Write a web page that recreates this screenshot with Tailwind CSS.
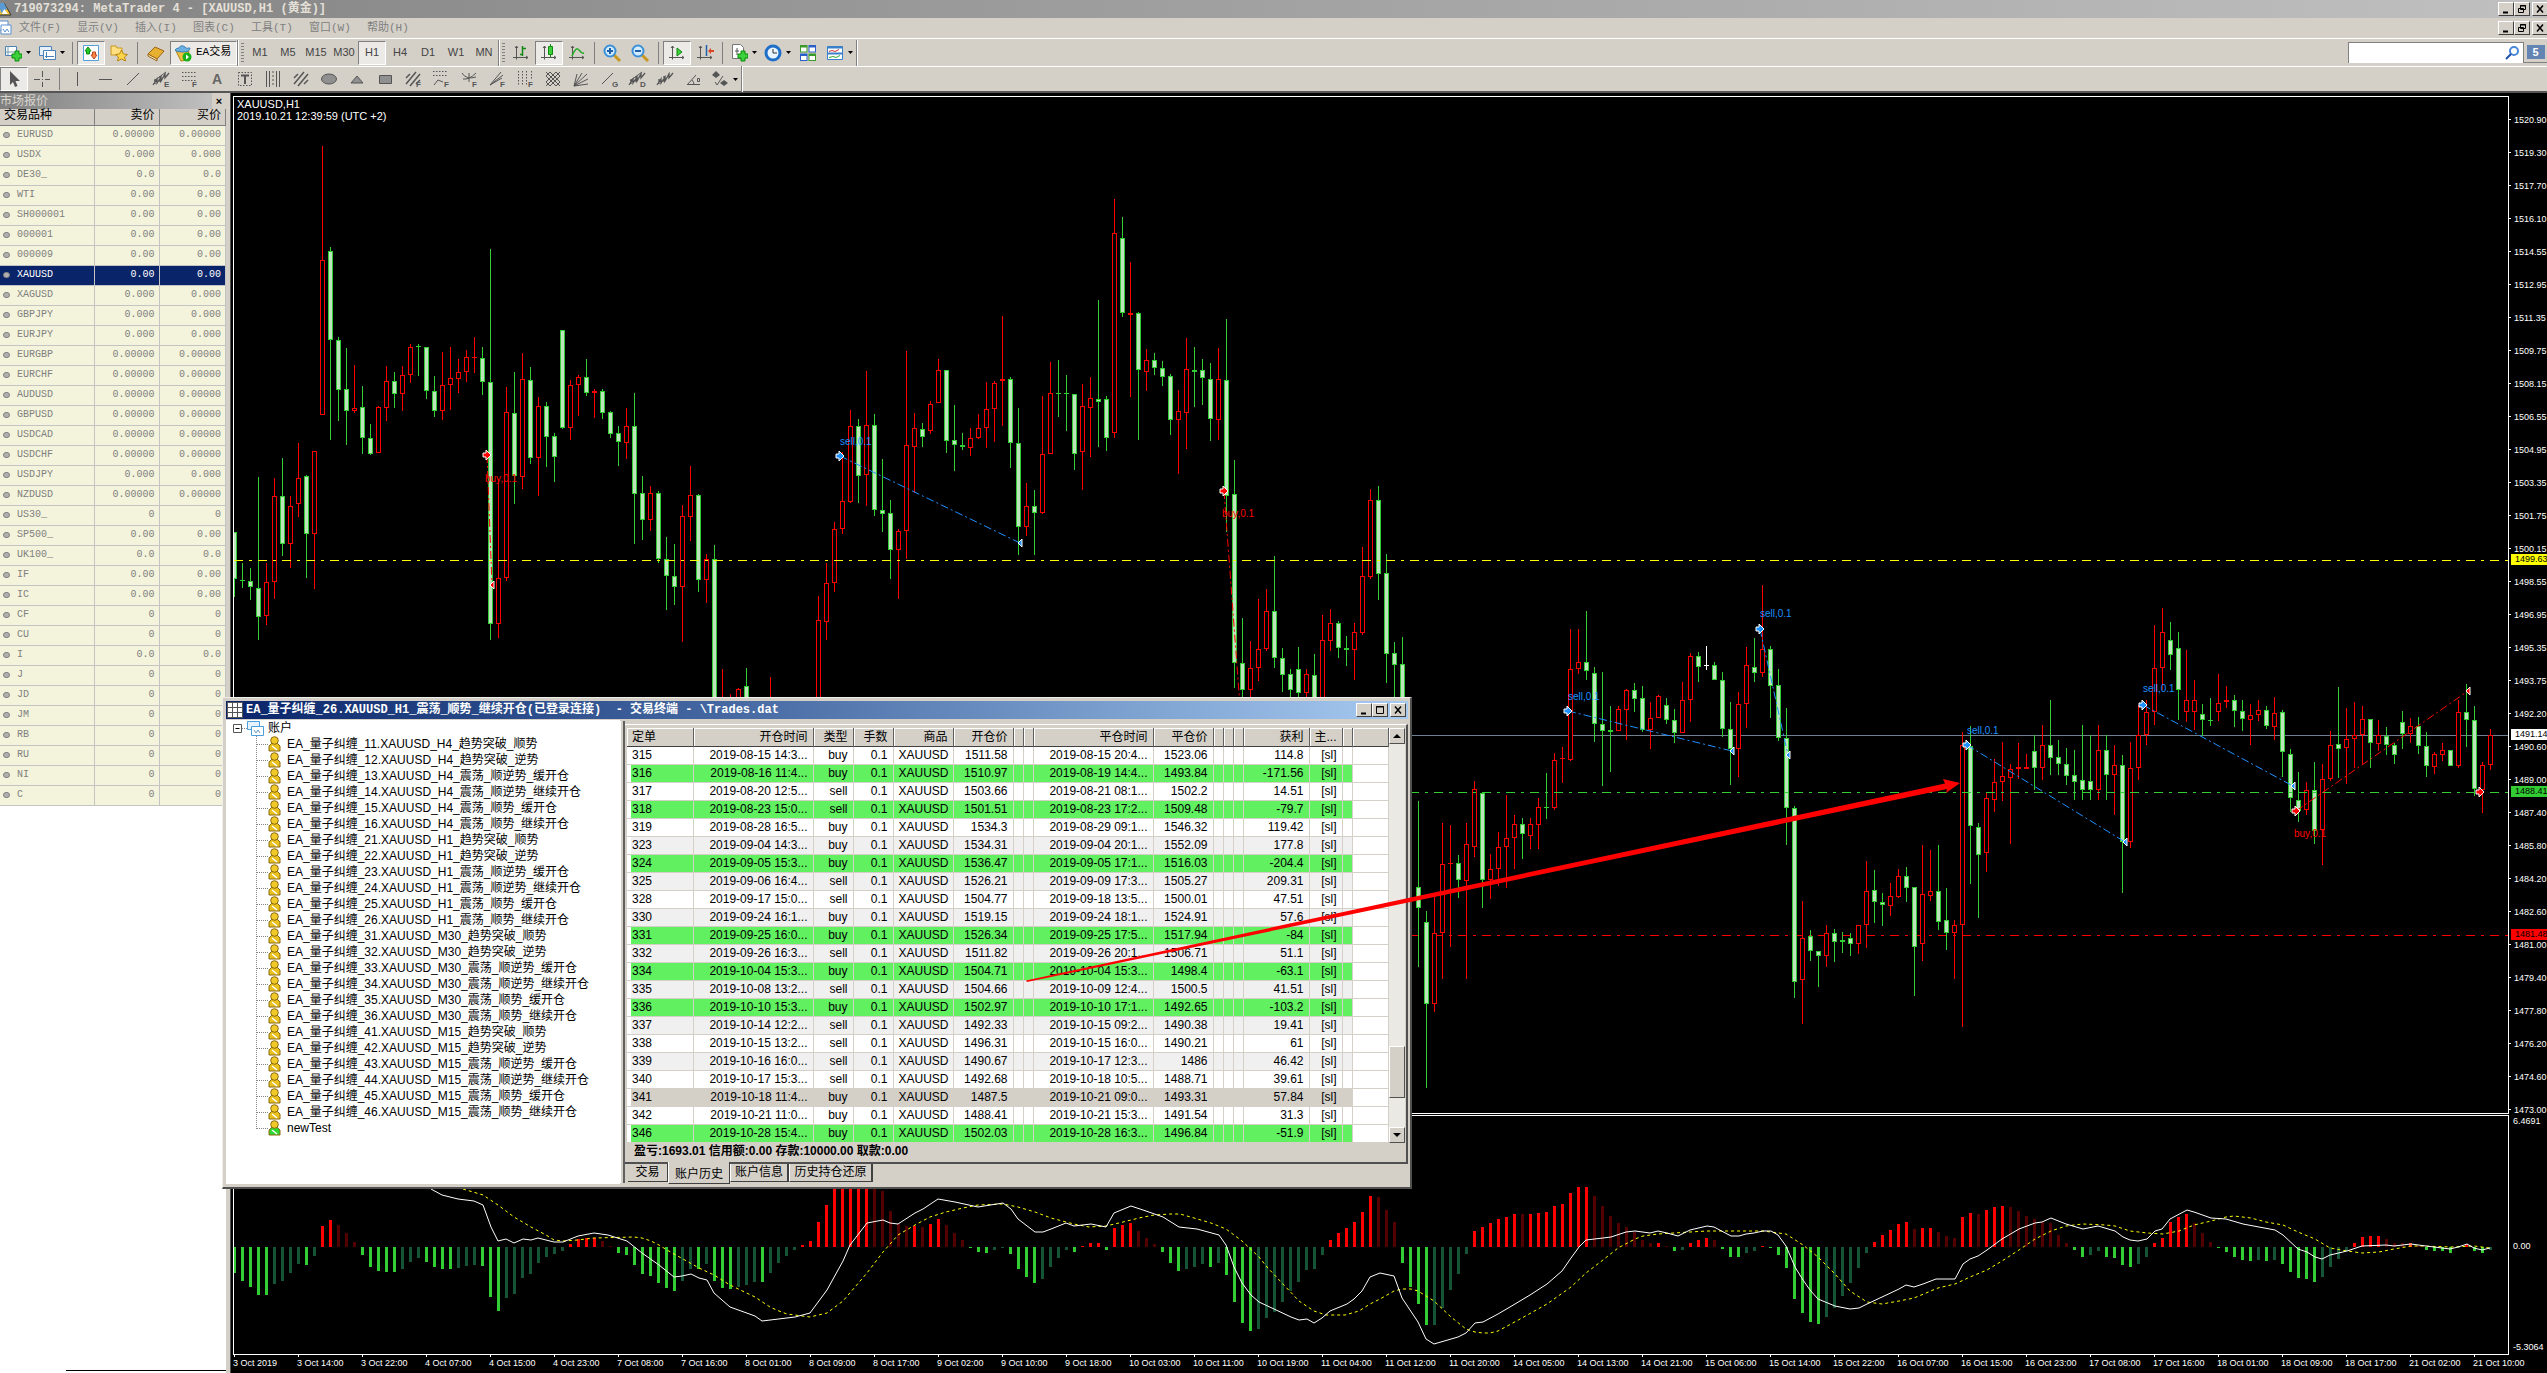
<!DOCTYPE html>
<html lang="zh-CN">
<head>
<meta charset="utf-8">
<title>719073294: MetaTrader 4 - [XAUUSD,H1 (黄金)]</title>
<script src="https://cdn.jsdelivr.net/npm/@tailwindcss/browser@4"></script>
</head>
<body class="relative flex min-h-screen flex-col overflow-hidden bg-[#d4d0c8] font-['Liberation_Sans','Noto_Sans_CJK_SC',sans-serif] text-xs text-black">

<header class="shrink-0">
  <div class="flex h-[18px] items-center bg-linear-to-r from-[#848484] to-[#c0c0c0]">
    <svg class="h-4 w-3" viewBox="4 0 12 16"><path d="M0 14 8 2l7 12z" fill="#f4c430" stroke="#333"/><path d="M3 2h5l3 6-6 4z" fill="#5b9bd5"/><path d="m8 8 4 5H6z" fill="#fff"/></svg>
    <h1 class="ml-[2px] flex-1 font-['Liberation_Mono','Noto_Sans_CJK_SC',monospace] text-xs font-bold whitespace-nowrap text-[#e4e0d8]">719073294: MetaTrader 4 - [XAUUSD,H1 (黄金)]</h1>
    <div class="-mr-[3px] flex" data-controls="restore"></div>
  </div>
  <nav class="flex h-5 items-center font-['Liberation_Mono','Noto_Sans_CJK_SC',monospace] text-[11px] text-[#808080]">
    <svg class="h-4 w-[19px]" viewBox="0 0 19 16" fill="none" stroke="#5b8fd0"><path d="M-3 1h11v9h-11z" fill="#fff"/><path d="M1 5h10v9H1z" fill="#fff"/><path d="m3 9 2 3 2-3 2 3"/></svg>
    <div class="flex flex-1" id="menu"></div>
    <div class="-mr-[3px] flex" data-controls="restore"></div>
  </nav>
  <div class="flex h-[28px] items-center border-t border-white shadow-[inset_0_1px_0_#d4d0c8]">
    <div id="tb1" class="flex h-[26px] flex-1 items-center"></div>
    <label class="flex h-[21px] w-[175px] items-center border-t border-l border-[#808080] bg-white">
      <input aria-label="搜索" class="h-full w-[155px] bg-white px-1 outline-none">
      <svg class="h-4 w-4" viewBox="0 0 16 16" fill="none"><circle cx="10" cy="6" r="4" stroke="#4a86d8" stroke-width="2"/><path d="m7 9-5 5" stroke="#1f4fa8" stroke-width="2"/></svg>
    </label>
    <button class="flex h-[21px] w-6 items-center justify-center border-b border-l border-[#808080]" aria-label="消息"><span class="h-[14px] w-[18px] bg-[#6484b4] text-center text-[11px] leading-[14px] font-bold text-white">5</span></button>
  </div>
  <div id="tb2" class="flex h-[27px] items-center border-t border-b-2 border-t-white border-b-[#555]"></div>
</header>

<main class="flex flex-1">
  <aside class="flex w-[226px] shrink-0 flex-col bg-white">
    <div class="flex h-4 items-center bg-linear-to-r from-[#808080] to-[#c4c4c4] text-xs text-[#d8d4cc]">
      <h2 class="flex-1">市场报价</h2>
      <button class="h-4 w-[14px] bg-[#d4d0c8] text-[11px] leading-4 font-bold text-black" aria-label="关闭">×</button>
    </div>
    <table class="w-full table-fixed border-collapse font-['Liberation_Mono','Noto_Sans_CJK_SC',monospace] text-[10px]">
      <thead>
        <tr class="h-4 bg-[#d4d0c8] text-xs">
          <th class="w-[94px] border-r border-b border-[#808080] pl-1 text-left leading-[15px] font-normal">交易品种</th>
          <th class="w-[65px] border-r border-b border-[#808080] pr-1 text-right leading-[15px] font-normal">卖价</th>
          <th class="border-r border-b border-[#808080] pr-1 text-right leading-[15px] font-normal">买价</th>
        </tr>
      </thead>
      <tbody id="quotes"></tbody>
    </table>
    <div class="mt-auto mb-[2px] ml-[66px] h-px bg-black"></div>
  </aside>
  <div class="w-1 shrink-0 bg-[#d4d0c8]"></div>

  <section class="flex min-w-0 flex-1 flex-col border-l border-[#555] bg-black pt-[3px] pl-[2px] text-white">
    <div class="flex h-[1018px] shrink-0">
      <div class="relative min-w-0 flex-1 overflow-hidden border border-white">
        <svg id="price" class="block h-full w-full"></svg>
        <div class="absolute top-px left-[3px] text-[11px] leading-3">XAUUSD,H1<br>2019.10.21 12:39:59 (UTC +2)</div>
      </div>
      <div class="relative w-[38px] shrink-0 overflow-hidden text-[9px]">
        <div id="scale" class="mt-[7px]"></div>
        <div class="absolute top-[458px] left-[2px] h-[11px] w-full bg-[#ff0] pl-1 leading-[11px] text-black">1499.63</div>
        <div class="absolute top-[633px] left-[2px] h-[11px] w-full bg-white pl-1 leading-[11px] text-black">1491.14</div>
        <div class="absolute top-[690px] left-[2px] h-[11px] w-full bg-[#32cd32] pl-1 leading-[11px] text-black">1488.41</div>
        <div class="absolute top-[833px] left-[2px] h-[11px] w-full bg-[#f00] pl-1 leading-[11px] text-black">1481.48</div>
      </div>
    </div>
    <div class="mt-px flex min-h-[236px] flex-1">
      <div class="min-w-0 flex-1 overflow-hidden border border-white">
        <svg id="macd" class="block h-[236px] w-full"></svg>
      </div>
      <div class="flex w-[38px] shrink-0 flex-col pl-1 text-[9px] leading-3">
        <span>6.4691</span><span class="mt-[113px]">0.00</span><span class="mt-[89px]">-5.3064</span>
      </div>
    </div>
    <div id="dates" class="flex h-[18px] shrink-0 overflow-hidden text-[9px]"></div>
  </section>
</main>

<section class="absolute top-[697px] left-[222px] flex h-[492px] w-[1190px] flex-col border-t border-r-2 border-b-2 border-l border-t-[#f0eee8] border-r-[#505050] border-b-[#505050] border-l-[#f0eee8] bg-[#d4d0c8] pt-[3px] pr-[2px] pb-[3px] pl-[3px]">
  <div class="flex h-[18px] shrink-0 items-center bg-linear-to-r from-[#0a246a] to-[#a6caf0]">
    <svg class="mx-[1px] h-4 w-4" viewBox="0 0 16 16" fill="#fff" stroke="#555"><path d="M.5.5h15v15H.5zM.5 5.5h15M.5 10.5h15M5.500.5v15M10.5.5v15"/></svg>
    <h2 class="ml-[2px] flex-1 font-['Liberation_Mono','Noto_Sans_CJK_SC',monospace] text-xs font-bold whitespace-pre text-white">EA_量子纠缠_26.XAUUSD_H1_震荡_顺势_继续开仓(已登录连接)  - 交易终端 - \Trades.dat</h2>
    <div class="flex" data-controls="max"></div>
  </div>
  <div class="flex min-h-0 flex-1 pt-px">
    <div class="relative w-[394px] shrink-0 bg-white pl-[7px]">
      <div class="flex h-4 items-center">
        <svg class="h-[17px] w-[31px]" viewBox="0 0 31 17" fill="none"><path d="M.5 4.500h8v8h-8z" stroke="#555"/><path d="M2.500 8.500h4" stroke="#000"/><path d="M9 8.500h5" stroke="#888" stroke-dasharray="1 1"/><path d="M14.500 1.500h12v8h-12z" fill="#e8f2ff" stroke="#4aa0dc"/><path d="M18.500 6.500h12v9h-12z" fill="#fff" stroke="#4aa0dc"/><path d="m21 10 2 3 2-3 2 3" stroke="#69c"/></svg>
        <span class="ml-1">账户</span>
      </div>
      <ul id="tree" class="ml-[22px] leading-4"></ul>
    </div>
    <div class="my-px w-[5px] shrink-0 border-l border-white border-r-2 border-r-[#606060]"></div>
    <div class="flex min-w-0 flex-1 flex-col">
      <div class="mt-1 flex h-[440px] flex-col border-t border-r-2 border-b-2 border-t-white border-r-[#505050] border-b-[#505050] pt-[3px] pl-[2px]">
        <div class="flex h-[415px] bg-white">
          <table class="w-[761px] table-fixed border-collapse self-start text-xs">
            <colgroup id="cols"></colgroup>
            <thead><tr id="heads" class="h-[18px] border-b border-[#404040] bg-[#d4d0c8]"></tr></thead>
            <tbody id="orders"></tbody>
          </table>
          <div class="flex w-4 shrink-0 flex-col bg-[#ebe9e4]">
            <button class="flex h-4 items-center justify-center border border-t-white border-r-[#505050] border-b-[#505050] border-l-white bg-[#d4d0c8]" aria-label="向上"><svg class="h-1 w-2" viewBox="0 0 8 4"><path d="m0 4 4-4 4 4z"/></svg></button>
            <div class="mt-[302px] h-[52px] border border-t-white border-r-[#505050] border-b-[#505050] border-l-white bg-[#d4d0c8]"></div>
            <button class="mt-auto flex h-4 items-center justify-center border border-t-white border-r-[#505050] border-b-[#505050] border-l-white bg-[#d4d0c8]" aria-label="向下"><svg class="h-1 w-2" viewBox="0 0 8 4"><path d="m0 0 4 4 4-4z"/></svg></button>
          </div>
          <div class="flex-1 bg-[#d4d0c8]"></div>
        </div>
        <p class="pl-[7px] leading-4 font-bold">盈亏:1693.01 信用额:0.00 存款:10000.00 取款:0.00</p>
      </div>
      <div class="flex items-start pl-[3px]">
        <button class="h-[18px] w-10 border-r border-b border-[#404040] leading-[17px]">交易</button>
        <button class="-mt-[2px] h-[22px] w-[62px] border-r border-b border-l border-[#404040] border-l-white bg-[#d4d0c8] pt-[3px]">账户历史</button>
        <button class="h-[18px] w-[59px] border-r-2 border-b border-l border-[#404040] border-l-white leading-[17px]">账户信息</button>
        <button class="h-[18px] w-[84px] border-r-2 border-b border-l border-[#404040] border-l-white leading-[17px]">历史持仓还原</button>
      </div>
    </div>
  </div>
</section>

<svg class="pointer-events-none absolute top-[770px] left-[1020px] h-[220px] w-[950px]" viewBox="1020 770 950 220"><path d="M1026 980.500 1420 895.500 1945 783.500 1943 779 1960 783 1946 793 1947 789 1420 900 1027 982z" fill="#f00"/></svg>

<script>
const $ = id => document.getElementById(id);
const box = 'flex h-[14px] w-4 items-center justify-center border border-t-white border-l-white border-b-[#404040] border-r-[#404040] bg-[#d4d0c8]';
const glyph = {
  min: ['最小化', '<path d="M2 8.500h5" stroke-width="2"/>'],
  restore: ['还原', '<path d="M3.500 1.500h5v4h-5zM1.500 4.500h5v4h-5zM3 2h6"/>'],
  max: ['最大化', '<path d="M1.500 1.500h7v7h-7zM1 2h8"/>'],
  close: ['关闭', '<path d="m2 1.500 6 7m0-7-6 7" stroke-width="1.500"/>']
};
document.querySelectorAll('[data-controls]').forEach(el => {
  el.innerHTML = ['min', el.dataset.controls, 'close'].map((k, i) => `<button class="${box} ${i === 2 ? 'ml-[2px] mr-[2px]' : ''}" aria-label="${glyph[k][0]}"><svg class="h-[10px] w-[10px]" viewBox="0 0 10 10" fill="none" stroke="#000">${glyph[k][1]}</svg></button>`).join('');
});
$('menu').innerHTML = ['文件(F)', '显示(V)', '插入(I)', '图表(C)', '工具(T)', '窗口(W)', '帮助(H)'].map(t => `<button class="w-[58px] text-left">${t}</button>`).join('');

/* toolbars */
const sep = '<span class="mx-1 h-[22px] w-px bg-[#808080]"></span>';
const slim = '<span class="mx-[3px] h-[22px] w-px bg-[#808080]"></span>';
const grip = '<span class="mx-[2px] h-5 w-[3px] bg-[repeating-linear-gradient(#808080_0_1px,transparent_1px_3px)]"></span>';
const edge = '<span class="h-[26px] w-[2px] border-r border-l border-l-[#808080] border-r-white"></span>';
const pressed = 'border border-t-[#808080] border-l-[#808080] border-b-white border-r-white bg-[#eceae6]';
const btn = (name, art, on) => `<button class="flex h-6 w-7 items-center justify-center ${on ? pressed : ''}" aria-label="${name}"><svg class="h-[18px] w-[18px] overflow-visible" viewBox="0 0 18 18" fill="none" stroke="#555">${art}</svg></button>`;
const drop = (name, art) => `<button class="flex h-6 w-[34px] items-center gap-1 pl-1" aria-label="${name}"><svg class="h-[18px] w-[18px]" viewBox="0 0 18 18" fill="none" stroke="#555">${art}</svg><svg class="h-[3px] w-[5px]" viewBox="0 0 5 3"><path d="M0 0h5L2.500 3z"/></svg></button>`;
const axes = '<path d="M4.500 2v13.500M1 13.500h15M3 4l1.500-2L6 4M14 12l2 1.500-2 1.500"/>';
const plus = '<path d="M11 7h4v3h3v4h-3v3h-4v-3H8v-4h3z" fill="#3bd13b" stroke="#0a8a0a"/>';
const F = (c = 'F') => `<text x="12" y="17" font-size="8" fill="#555" stroke="none" font-weight="bold">${c}</text>`;
$('tb1').innerHTML =
  drop('新图表', '<path d="M1.500 2.500h11v9h-11z" fill="#fff" stroke="#4a80b8"/><path d="M4 2v9M2 8h10" stroke="#79a"/>' + plus) +
  drop('配置', '<path d="M1.500 2.500h12v9h-12z" fill="#e6f0fa" stroke="#4a80b8"/><path d="M5.500 6.500h12v9h-12z" fill="#fff" stroke="#4a80b8"/><path d="M8.500 8v6M7 12.500h9"  stroke="#4a80b8"/>') + sep +
  btn('市场报价', '<path d="M1.500 1.500h15v15h-15z" fill="#fff" stroke="#58a0d8"/><path d="m6 3 3 4H7.500v3h-3V7H3z" fill="#2c2" stroke="#181"/><path d="m12 15-3-4h1.500V8h3v3H15z" fill="#f84" stroke="#b42"/>', 1) +
  btn('导航', '<path d="M1 2h5l1 2h5v7H1z" fill="#ffe080" stroke="#c99820"/><path d="m11.500 6 2 4 4 .5-3 2.500 1 4-4-2-4 2 1-4-3-2.500 4-.5z" fill="#ffd54a" stroke="#b98410"/>') + sep +
  btn('指南', '<path d="m1 10 7-7 9 4-7 8z" fill="#e8b030" stroke="#9a6410"/><path d="m1 10 9 5 0 2-9-5z" fill="#fff4c8" stroke="#9a6410"/>') +
  `<button class="flex h-6 w-[67px] items-center gap-1 pl-[3px] text-xs whitespace-nowrap ${pressed}"><svg class="h-[18px] w-[18px]" viewBox="0 0 18 18"><path d="M2 7h13l-2 9-6 1z" fill="#f0c040" stroke="#b08010"/><path d="M1 6q1-2 4-2 2-4 6-1 1 2 5 1 0 4-7 4T1 6z" fill="#6ab0e0" stroke="#3a80b8"/><circle cx="13" cy="13" r="4.500" fill="#18b018"/><path d="m12 10.500 3 2.500-3 2.500z" fill="#fff"/></svg><span class="font-['Liberation_Mono','Noto_Sans_CJK_SC',monospace] text-[11px]">EA交易</span></button>` + edge + grip +
  ['M1', 'M5', 'M15', 'M30', 'H1', 'H4', 'D1', 'W1', 'MN'].map(t => `<button class="h-6 w-7 text-[11px] text-[#444] ${t === 'H1' ? pressed : ''}">${t}</button>`).join('') + edge + grip +
  btn('柱状图', axes + '<path d="M10.500 2v10M8 10.500h2M11 4.500h3" stroke="#181" stroke-width="1.500"/>') +
  btn('阴阳烛', axes + '<path d="M10.500 0v13" stroke="#181"/><path d="M8.500 2.500h4v8h-4z" fill="#3bd13b" stroke="#181"/>', 1) +
  btn('折线图', axes + '<path d="M4 12q4-10 7-6t5 3" stroke="#2a2" stroke-width="1.500"/>') + slim +
  ['放大', '缩小'].map((n, i) => btn(n, `<path d="m11 11 6 6" stroke="#c99820" stroke-width="3"/><circle cx="7" cy="7" r="5.500" fill="#d4ecff" stroke="#3a90d8" stroke-width="2"/><path d="M4 7h6${i ? '' : 'M7 4v6'}" stroke="#1f5fa8" stroke-width="2"/>`)).join('') + sep +
  btn('自动滚动', axes + '<path d="m9 4 5 4-5 4z" fill="#3bd13b" stroke="#181"/>', 1) +
  btn('图表平移', axes + '<path d="M10.500 1v11" stroke="#1f5fa8" stroke-width="1.500"/><path d="m12 7 3-3v2h3v2h-3v2z" fill="#d42" stroke="none"/>') + slim +
  drop('指标', '<path d="M2.500.5h8l3 3v11h-11z" fill="#fff" stroke="#777"/><path d="M7 4v7M5 7h4" stroke="#555"/>' + plus) +
  drop('时间周期', '<circle cx="9" cy="9" r="7" fill="#e8f4ff" stroke="#1f6fc8" stroke-width="3"/><path d="M9 5v4h4" stroke="#333"/>') +
  btn('模板', '<path d="M1 1h7.500v7.500H1zM9.500 9.500H17V17H9.500z" fill="#3a9a2a" stroke="none"/><path d="M9.500 1H17v7.500H9.500zM1 9.500h7.500V17H1z" fill="#2a60c8" stroke="none"/><path d="M2 3.500h5.500v4H2zM10.500 3.500H16v4h-5.500zM2 12h5.500v4H2zM10.500 12H16v4h-5.500z" fill="#fff" stroke="none"/>') +
  drop('图表', '<path d="M1.500 2.500h15v13h-15z" fill="#fff" stroke="#3a80c8"/><path d="M1 3.500h16M1 9.500h16" stroke="#3a80c8" stroke-width="2"/><path d="M3 7.500l3-1 3 1 4-2" stroke="#c33"/><path d="m3 13.500 4-1 3 1 4-2" stroke="#3a3"/>') + edge;

const hatch = '<path d="M2 14 12 2M6 16 16 4M2 8l4-4M12 14l4-4" stroke-width="1.500"/>';
const squig = '<path d="m1 15 4-6v4l4-6v4l4-7v4l4-5M3 9v5M8 6v6M13 3v6" stroke-width="1.300"/>';
const dots = '<path d="M2 2.500h14M2 6.500h14M2 10.500h14" stroke-dasharray="1.500 1.500"/>';
const tools = [
  ['斜线', '<path d="M3 15 15 3"/>'], ['通道', squig + '<path d="m2 11 12-9"/>' + F('E')], ['斐波那契', dots + F()],
  ['文字', '<text x="4" y="14" font-size="14" font-weight="bold" fill="#666" stroke="none">A</text>'],
  ['标签', '<path d="M2.500 2.500h13v13h-13z" stroke-dasharray="1.500 1.500"/><path d="M5 5.500h8M9 5v9" stroke-width="2"/>'],
  ['周期线', '<path d="M2.500 1v16M5.500 1v16M12.500 1v16M15.500 1v16"/><path d="M9 1v16" stroke-dasharray="2 2"/>'],
  ['平行线', hatch], ['椭圆', '<ellipse cx="9" cy="9" rx="7.500" ry="5" fill="#909090"/>'], ['三角形', '<path d="m3 13 6-7 6 7z" fill="#909090"/>'],
  ['矩形', '<path d="M3.500 5.500h12v8h-12z" fill="#909090"/>'], ['通道F', hatch + F()], ['扩展', '<path d="M1 1.500h15M1 5.500h15" stroke-dasharray="1.500 1.500"/><path d="m2 15 4-5 5 2"/>' + F()],
  ['弧线', '<path d="M2 3q4 7 14 4M3 9q6 1 13-6M9 3v9"/>' + F()], ['扇形', '<path d="M2 15 13 2M2 15 15 5M2 15l12-7"/>' + F()],
  ['时区', '<path d="M2.500 1v15M6.500 1v15M10.500 1v15M15.500 1v9" stroke-dasharray="1.500 1.500"/>' + F()],
  ['网格', '<path d="m2 6 4-4 10 10M2 12l4 4L16 6M2 6l10 10 4-4M2 12 12 2l4 4M2 2l14 14M16 2 2 16"/>'],
  ['甘氏扇', '<path d="M2 16 5 4M2 16 10 3M2 16 15 4M2 16l14-7M2 16l14-2"/>'], ['甘氏线', '<path d="M2 14 13 3"/>' + F('G')],
  ['偏差', squig + '<path d="m2 11 12-9"/>' + F('D')], ['回归', squig], ['角度', '<path d="M3 15 12 5M3 14.500h13M10 15q0-3-2-5M13.500 8.500h2v3h-2z"/>']
];
$('tb2').innerHTML = btn('光标', '<path d="m5 1 0 14 3-3 2 5 2.500-1-2-5H15z" fill="#555" stroke="none"/>', 1) + btn('十字', '<path d="M9.500 1v6M9.500 12v5M1 9.500h6M12 9.500h5M9 9.500h1"/>') + slim +
  btn('垂直线', '<path d="M9.500 2v14"/>') + btn('水平线', '<path d="M3 9.500h13"/>') + tools.map(t => btn(...t)).join('') +
  drop('箭头', '<path d="m5 1 4 4-4 3-4-3zM13 10l4 3-4 3-4-3z" fill="#555" stroke="none"/><path d="m4 12 2 3 6-9"/>') + edge;

/* market watch */
const q = 'EURUSD 5,USDX 3,DE30_ 1,WTI 2,SH000001 2,000001 2,000009 2,XAUUSD 2,XAGUSD 3,GBPJPY 3,EURJPY 3,EURGBP 5,EURCHF 5,AUDUSD 5,GBPUSD 5,USDCAD 5,USDCHF 5,USDJPY 3,NZDUSD 5,US30_ 0,SP500_ 2,UK100_ 1,IF 2,IC 2,CF 0,CU 0,I 1,J 0,JD 0,JM 0,RB 0,RU 0,NI 0,C 0'.split(',');
$('quotes').innerHTML = q.map(s => {
  const [n, d] = s.split(' '), v = (0).toFixed(+d), on = n === 'XAUUSD';
  const td = 'border-r border-b border-[#c4c4c4] pr-1 text-right';
  return `<tr class="h-5 ${on ? 'bg-[#0a246a] text-white' : 'bg-[#f4f4dc] text-[#808080]'}"><td class="border-r border-b border-[#c4c4c4] pl-[3px]"><span class="mr-[7px] inline-block h-[6px] w-[7px] rounded-full border border-[#808080] bg-[#b0b0b0] align-middle"></span>${n}</td><td class="${td}">${v}</td><td class="${td}">${v}</td></tr>`;
}).join('');

/* account tree */
const kinds = ['趋势突破_顺势', '趋势突破_逆势', '震荡_顺逆势_缓开仓', '震荡_顺逆势_继续开仓', '震荡_顺势_缓开仓', '震荡_顺势_继续开仓'];
const names = ['H4', 'H1', 'M30', 'M15'].flatMap((tf, g) => kinds.map((k, i) => `EA_量子纠缠_${g + 1}${i + 1}.XAUUSD_${tf}_${k}`)).concat('newTest');
$('tree').innerHTML = names.map(n => `<li class="flex h-4 items-center whitespace-nowrap"><svg class="mr-1 h-4 w-7" viewBox="0 0 28 16"><path d="M1.500 0v${n === 'newTest' ? 9 : 16}M2 8.500h11" stroke="#888" stroke-dasharray="1 1" fill="none"/><path d="M14 15v-5l3-3h5l3 3v5z" fill="${n === 'newTest' ? '#2fd62f' : '#e8c020'}" stroke="#8a6a10"/><circle cx="19.500" cy="4.500" r="3.800" fill="#f0c828" stroke="#8a6a10"/><path d="m17 10 5 4" stroke="#fff" stroke-width="1.500"/></svg>${n}</li>`).join('');

/* order history */
const w = [66, 120, 40, 40, 60, 60, 10, 10, 120, 60, 10, 10, 10, 66, 33, 10, 36];
const heads = ['定单', '开仓时间', '类型', '手数', '商品', '开仓价', '', '', '平仓时间', '平仓价', '', '', '', '获利', '主...', '', ''];
$('cols').innerHTML = w.map(x => `<col style="width:${x}px">`).join('');
$('heads').innerHTML = heads.map((h, i) => `<th class="overflow-hidden border-r border-[#606060] px-[5px] leading-4 font-normal whitespace-nowrap shadow-[inset_1px_1px_0_#fff] ${i ? 'text-right' : 'text-left'}">${h}</th>`).join('');
const orders = `315|08-15 14:3|buy|1511.58|08-15 20:4|1523.06|114.8
316|08-16 11:4|buy|1510.97|08-19 14:4|1493.84|-171.56
317|08-20 12:5|sell|1503.66|08-21 08:1|1502.2|14.51
318|08-23 15:0|sell|1501.51|08-23 17:2|1509.48|-79.7
319|08-28 16:5|buy|1534.3|08-29 09:1|1546.32|119.42
323|09-04 14:3|buy|1534.31|09-04 20:1|1552.09|177.8
324|09-05 15:3|buy|1536.47|09-05 17:1|1516.03|-204.4
325|09-06 16:4|sell|1526.21|09-09 17:3|1505.27|209.31
328|09-17 15:0|sell|1504.77|09-18 13:5|1500.01|47.51
330|09-24 16:1|buy|1519.15|09-24 18:1|1524.91|57.6
331|09-25 16:0|buy|1526.34|09-25 17:5|1517.94|-84
332|09-26 16:3|sell|1511.82|09-26 20:1|1506.71|51.1
334|10-04 15:3|buy|1504.71|10-04 15:3|1498.4|-63.1
335|10-08 13:2|sell|1504.66|10-09 12:4|1500.5|41.51
336|10-10 15:3|buy|1502.97|10-10 17:1|1492.65|-103.2
337|10-14 12:2|sell|1492.33|10-15 09:2|1490.38|19.41
338|10-15 13:2|sell|1496.31|10-15 16:0|1490.21|61
339|10-16 16:0|sell|1490.67|10-17 12:3|1486|46.42
340|10-17 15:3|sell|1492.68|10-18 10:5|1488.71|39.61
341|10-18 11:4|buy|1487.5|10-21 09:0|1493.31|57.84
342|10-21 11:0|buy|1488.41|10-21 15:3|1491.54|31.3
346|10-28 15:4|buy|1502.03|10-28 16:3|1496.84|-51.9`.split('\n').map(r => r.split('|'));
$('orders').innerHTML = orders.map((o, n) => {
  const bg = o[6] < 0 ? 'bg-[#60f060]' : o[0] === '341' ? 'bg-[#d4d0c8]' : n % 2 ? 'bg-[#f0f0f0]' : 'bg-white';
  const cells = [o[0], `2019-${o[1]}...`, o[2], '0.1', 'XAUUSD', o[3], '', '', `2019-${o[4]}...`, o[5], '', '', '', o[6], '[sl]', '', ''];
  return '<tr class="h-[18px]">' + cells.map((c, i) => `<td class="overflow-hidden border-r border-b border-[#d4d0c8] py-0 leading-[17px] whitespace-nowrap ${i === 0 ? 'pl-[5px] text-left shadow-[inset_4px_0_0_#fff]' : 'px-[5px] text-right'} ${i === 16 ? 'bg-white' : bg}">${c}</td>`).join('') + '</tr>';
}).join('');

/* chart scales */
const prices = '1520.90 1519.30 1517.70 1516.10 1514.55 1512.95 1511.35 1509.75 1508.15 1506.55 1504.95 1503.35 1501.75 1500.15 1498.55 1496.95 1495.35 1493.75 1492.20 1490.60 1489.00 1487.40 1485.80 1484.20 1482.60 1481.00 1479.40 1477.80 1476.20 1474.60 1473.00'.split(' ');
$('scale').innerHTML = prices.map(p => `<div class="flex h-[33px] items-center"><i class="mr-[3px] h-px w-[2px] bg-white"></i>${p}</div>`).join('');
const dates = '3 Oct 2019,3 Oct 14:00,3 Oct 22:00,4 Oct 07:00,4 Oct 15:00,4 Oct 23:00,7 Oct 08:00,7 Oct 16:00,8 Oct 01:00,8 Oct 09:00,8 Oct 17:00,9 Oct 02:00,9 Oct 10:00,9 Oct 18:00,10 Oct 03:00,10 Oct 11:00,10 Oct 19:00,11 Oct 04:00,11 Oct 12:00,11 Oct 20:00,14 Oct 05:00,14 Oct 13:00,14 Oct 21:00,15 Oct 06:00,15 Oct 14:00,15 Oct 22:00,16 Oct 07:00,16 Oct 15:00,16 Oct 23:00,17 Oct 08:00,17 Oct 16:00,18 Oct 01:00,18 Oct 09:00,18 Oct 17:00,21 Oct 02:00,21 Oct 10:00'.split(',');
$('dates').innerHTML = dates.map(d => `<div class="w-16 shrink-0 leading-3 whitespace-nowrap"><i class="ml-px block h-[2px] w-px bg-white"></i>${d}</div>`).join('');

/* candles: colour high top bottom low; one block per [first bar, y origin, units per px] */
const blocks = [
[0, 90, 2.529, `g 1118 1118 1236 1281,g 1196 1238 1243 1259,g 1209 1243 1258 1291,g 979 1260 1334 1390,r 1196 1245 1329 1353,r 981 1028 1245 1286,g 931 1028 1147 1179,r 1027 1051 1147 1209,r 893 980 1048 1080,g 973 976 1122 1234,r 914 914 1122 1262,r 142 431 821 821,g 397 408 631 885,g 625 631 758 837,g 652 757 811 898,r 695 803 811 817,g 749 802 879 921,g 845 879 920 923,r 799 802 919 919,r 698 737 803 837,g 713 737 768 804,r 698 722 768 812,r 642 651 722 741,g 642 648 651 723,g 651 651 760 781,g 723 760 811 827,r 663 747 813 835,r 650 729 745 809,r 680 712 730 766,r 658 676 713 738,r 625 676 677 716,g 650 679 738 771,g 401 738 1350 1390,r 985 1233 1350 1387,r 751 815 1233 1243,g 713 818 975 1047,r 665 732 978 1009,g 701 734 930 946,r 776 800 930 1027,g 788 800 878 953,g 867 874 927 991,g 608 608 854 857,r 733 745 854 885,r 721 727 745 824,g 680 727 766 773,r 756 760 766 829,g 756 760 816 832,g 812 815 869 880,g 850 868 889 951,r 804 849 892 933,g 766 849 1021 1148,g 976 1020 1088 1138,r 1001 1020 1088 1115,g 1014 1020 1185 1196,g 1130 1185 1228 1315,g 1148 1228 1256 1302,r 1050 1078 1256 1396,r 951 1023 1081 1141,g 1022 1025 1238 1270,r 1173 1185 1238 1297,g 1151 1185 1700 1700,r 1464 1600 1700 1700,r 1528 1600 1700 1700,r 1512 1516 1700 1700,g 1462 1508 1700 1700,r 1650 1650 1700 1700,r 1650 1650 1700 1700,r 1485 1600 1700 1700`],
[73, 160, 2.8, `r 1221 1289 1600 1600,r 1127 1183 1293 1343,r 1014 1034 1183 1210,r 818 956 1032 1047,r 700 746 957 960,g 725 746 884 960,r 591 743 881 969,g 711 743 979 997,g 837 981 990 1042,g 952 989 1091 1173,r 1033 1040 1091 1229,r 535 799 1040 1117,r 708 751 803 933,g 736 754 775 804,r 675 684 758 767,r 557 589 679 679,g 589 589 786 820,g 686 785 797 871,g 764 798 803 812,r 750 777 805 829,r 711 751 777 781,r 622 698 751 806,r 619 623 698 790,r 437 613 618 745,g 608 614 791 862,g 694 791 1027 1106,r 904 970 1027 1053,g 924 970 987 1106,r 661 822 988 991,r 566 651 822 822,g 560 651 654 720,g 602 653 654 759,g 656 656 822 868,r 627 690 817 924,r 608 667 693 832,g 392 670 677 804,g 661 670 777 815,r 109 203 763 777,g 160 217 427 440,r 286 427 433 664,g 426 429 587 784,r 529 561 593 647,g 540 561 581 602,g 563 581 607 633,g 599 606 727 770,r 644 704 727 879,r 498 586 707 809,g 524 589 593 692,g 557 589 609 686,g 568 614 724 787,r 526 614 727 784,g 445 617 940 1042,g 840 936 1407 1478,g 1282 1409 1483 1600,r 1347 1423 1483 1520,r 1229 1370 1423 1459,r 1201 1264 1368 1375,g 1109 1264 1393 1422,g 1366 1393 1441 1490,g 1425 1438 1483 1600,g 1364 1426 1491 1520,r 1425 1438 1491 1600,g 1383 1443 1600 1600,r 1274 1345 1600 1600,r 1257 1297 1346 1375,g 1291 1297 1365 1394,g 1333 1365 1371 1417,r 1296 1322 1371 1456,r 1084 1165 1323 1330,r 921 953 1167 1173,g 913 953 1158 1232,g 1103 1157 1382 1464,g 1350 1379 1413 1600,g 1336 1412 1600 1600`],
[148, 460, 2.45, `g 835 1045 1097 1242,g 1105 1133 1332 1539,r 1070 1160 1332 1352,r 889 991 1160 1272,r 894 988 990 1193,g 968 988 1028 1073,r 889 942 1032 1272,r 786 805 947 973,g 813 816 1030 1098,r 965 1003 1028 1076,r 911 947 1001 1044,r 821 927 947 1049,r 870 893 927 1002,g 877 893 917 978,r 877 893 920 953,r 827 851 895 953,g 767 851 853 880,r 718 734 852 857,r 703 731 733 791,r 414 513 734 737,r 414 496 513 524,g 370 496 518 539,g 507 522 648 691,g 519 648 663 799,g 603 662 667 764,r 603 611 665 665,r 561 564 613 686,g 546 564 585 617,g 554 582 661 666,r 593 631 661 708,r 576 579 631 631,g 583 601 638 647,g 609 638 670 693,r 544 587 670 670,r 473 481 587 642,g 470 481 506 544,w 456 503 504 514,g 495 503 538 538,g 519 538 660 679,g 593 660 709 796,r 569 597 709 777,r 458 503 597 657,g 436 506 523 544,r 306 462 521 532,g 456 463 553 632,g 512 552 681 688,g 608 680 852 943,g 848 852 1278 1318,r 1080 1172 1273 1382,g 1151 1167 1202 1227,g 1203 1203 1214 1291,r 1139 1160 1214 1242,g 1149 1160 1180 1230,g 1156 1177 1182 1208,g 1159 1172 1185 1215,r 1140 1140 1185 1210,r 982 1057 1140 1196,g 1004 1054 1084 1134,g 1061 1084 1091 1142,r 1036 1069 1092 1117,r 1002 1020 1070 1073,g 997 1020 1048 1083,g 1047 1047 1192 1313,r 943 1064 1187 1227,r 955 1057 1067 1080,g 943 1057 1131 1151,g 1049 1128 1158 1200,r 1127 1140 1160 1272,r 666 699 1140 1389,g 652 700 896 1039,g 890 898 967 1122,r 816 829 964 1009,r 733 790 832 862,r 691 775 790 835,r 745 758 778 941,r 693 753 758 782,r 720 753 758 758`],
[225, 0, 1, `g 735 751 768 790,r 725 745 768 780,g 700 745 758 775,g 740 757 764 775,g 748 764 776 785,g 750 775 782 800,g 725 780 790 800,g 735 781 790 800,r 725 750 790 800,g 735 750 775 800,r 745 765 775 815,g 755 765 842 893,r 742 768 842 848,r 705 735 768 780,r 700 712 735 745,r 625 668 712 725,r 608 632 668 690,g 622 640 655 670,g 632 648 690 720,r 650 700 712 722,r 680 700 712 730`],
[246, 660, 2.2, `g 97 118 132 168,g 84 131 134 145,r 31 94 115 134,r 57 89 93 106,g 77 89 112 148,g 87 113 130 156,r 96 122 132 187,r 87 111 121 134,g 101 111 146 151,r 82 116 148 175,g 111 115 203 257,g 196 206 304 334,g 246 307 333 356,r 268 285 331 341,g 224 285 377 405,r 229 261 375 451,r 156 186 261 266,g 59 184 196 260,r 106 173 194 273,r 93 166 173 238,r 101 129 166 228,g 129 129 183 238,r 132 164 184 200,g 147 167 186 209,g 182 186 209 229,g 112 137 162 196,r 128 146 162 183,g 125 146 190 207,g 158 190 234 257,r 202 206 236 250,r 183 199 208 222,g 199 199 233 234,r 87 115 234 238,g 53 115 132 191,g 101 133 284 300,r 224 232 285 336,r 151 166 232 243`]
];
const ink = { r: '#f00', g: '#32cd32', w: '#fff' }, fill = { r: '#000', g: '#bde5bd', w: '#fff' };
const level = (y, c, d) => `<path d="M234 ${y}.5H6000" stroke="${c}" ${d ? 'stroke-dasharray="9 6 3 6"' : ''}/>`;
let art = '<g fill="none" shape-rendering="crispEdges">' + level(735, '#708090') + level(935, '#f00', 1);
for (const [start, oy, k, text] of blocks) text.split(',').forEach((t, i) => {
  const [c, ...v] = t.split(' '), [h, a, b, l] = v.map(n => Math.round(oy + n / k)), x = 234 + 8 * (start + i);
  art += `<path d="M${x}.5 ${h}V${l}" stroke="${ink[c]}"/>` + (b - a < 2 ? `<path d="M${x - 2} ${a}.5h5" stroke="${ink[c]}"/>` : `<rect x="${x - 1.5}" y="${a + .5}" width="4" height="${b - a - 1}" fill="${fill[c]}" stroke="${ink[c]}"/>`);
});
art += level(560, '#ff0', 1) + level(792, '#32cd32', 1) + '</g>';

/* trades: side, open x/y, close x/y, label y */
const blue = '#1e90ff', red = '#f00';
const trades = [[red, 487, 455, 492, 585, 482], [blue, 840, 456, 1020, 543, 445], [red, 1224, 491, 1244, 760, 517], [blue, 1568, 711, 1732, 751, 700], [blue, 1760, 629, 1788, 755, 617], [blue, 1967, 745, 2125, 842, 734], [blue, 2143, 705, 2293, 786, 692], [red, 2296, 811, 2468, 691, 837], [red, 2480, 792]];
for (const [c, x, y, x2, y2, ty] of trades) {
  if (x2) art += `<path d="M${x} ${y} ${x2} ${y2}" stroke="${c}" stroke-dasharray="8 3 2 3"/><path d="m${x2 - 2} ${y2} 4-4v8z" fill="${c}" stroke="#fff"/><text x="${c === red ? x - 2 : x}" y="${ty}" font-size="10" fill="${c}">${c === red ? 'buy' : 'sell'},0.1</text>`;
  art += `<path d="M${x - 4} ${y - 2}h3v-3l5 5-5 5v-3h-3z" fill="${c}" stroke="#fff"/>`;
}
$('price').innerHTML = `<g transform="translate(-234 -97)">${art}</g>`;

/* MACD histogram, thirds of a pixel above or below zero */
const hist = [-78,-102,-120,-144,-144,-111,-102,-78,-51,-54,-27,63,81,66,42,15,-24,-60,-72,-75,-75,-66,-45,-33,-45,-60,-66,-66,-63,-57,-54,-57,-150,-192,-153,-141,-93,-81,-48,-30,-21,-12,9,24,27,27,18,4,-18,-24,-54,-81,-87,-108,-123,-132,-102,-66,-66,-51,-102,-123,-126,-120,-114,-105,-105,-78,-48,-27,-9,6,18,75,126,180,190,200,205,210,190,168,108,69,63,63,60,69,84,66,42,21,-1,-15,-18,-9,-2,-21,-66,-90,-108,-96,-60,-33,-9,-15,3,12,12,-9,57,66,72,48,27,9,-15,-48,-72,-66,-60,-51,-60,-48,-84,-165,-228,-252,-246,-213,-195,-165,-132,-105,-69,-66,-24,21,42,57,75,105,153,150,111,75,-48,-120,-171,-234,-233,-183,-129,-81,-21,48,60,72,84,90,99,98,99,102,105,123,129,162,180,180,153,123,93,72,60,45,21,11,12,3,-12,-9,12,21,27,21,-6,-30,-30,-18,-12,3,-2,-24,-63,-156,-198,-225,-231,-210,-183,-147,-108,-63,-18,15,36,51,69,75,54,57,57,45,33,27,90,102,99,111,120,123,120,108,93,84,75,72,36,12,-9,-30,-24,-12,-30,-33,-54,-60,-51,-30,12,27,75,90,99,72,42,15,-2,-15,-30,-39,-42,-39,-42,-39,-51,-75,-93,-96,-105,-90,-60,-36,-12,12,30,33,33,24,12,11,12,3,-9,-12,-12,-18,-3,9,-12,-18,-9];
let m = '<g shape-rendering="crispEdges">';
hist.forEach((v, i) => {
  const p = i ? hist[i - 1] : 0, h = Math.max(1, Math.round(Math.abs(v) / 3));
  const c = v > 0 ? (v >= p ? '#f00' : '#550000') : (v <= p ? '#32cd32' : '#145538');
  m += `<rect x="${233 + 8 * i}" y="${v > 0 ? 1247 - h : 1247}" width="3" height="${h}" fill="${c}"/>`;
});
m += '</g>';
const curve = (parts, attrs) => `<path fill="none" ${attrs} d="M${parts.flatMap(([x0, k, s]) => s.split(' ').map(p => { const [x, y] = p.split(','); return Math.round(x0 + x / k) + ' ' + Math.round(1170 + y / 3); })).join('L')}"/>`;
m += curve([[220, 1.3517, '328,57 355,75 376,106 398,140 420,170 441,194 452,209 463,212 484,209 506,204 560,202 571,205 582,213 593,226 604,240 647,295 668,315 690,344 723,380 744,410 755,424 766,433 798,441 820,430 842,393 874,310 896,245 917,195 939,165 960,142 982,126 1004,115 1025,106 1058,101 1079,112 1101,127 1123,144 1144,157 1155,163 1175,172 1198,168 1220,157 1242,145 1263,136 1285,132 1298,132 1317,145 1339,160 1360,178 1382,214 1404,262 1415,290 1436,338 1458,394 1479,424 1495,436 1520,436 1540,424 1555,402'],
[1380, 1.3436, '0,387 19,364 30,357 41,357 51,364 73,393 95,440 116,478 127,486 138,490 148,490 159,483 191,445 224,403 256,350 277,310 299,270 320,235 342,206 353,199 374,191 417,187 439,184 514,184 546,193 568,225 589,260 611,312 632,362 654,397 675,403 697,394 718,384 750,355 772,343 793,322 815,300 836,272 858,240 880,208 901,184 922,168 944,163 976,164 987,169 1008,182 1030,190 1052,192 1073,183 1094,165 1116,154 1137,141 1148,139 1170,145 1191,156 1213,166 1234,185 1256,208 1277,233 1299,243 1320,248 1342,246 1363,238 1385,229 1400,227 1440,230 1470,229 1492,233']], 'stroke="#ff0" stroke-dasharray="3 3"');
m += curve([[220, 1.3517, '285,57 300,75 322,88 344,94 355,105 366,170 376,214 387,208 398,220 409,206 420,211 430,205 441,209 452,217 463,217 484,197 506,190 525,196 550,212 571,248 593,285 614,322 625,318 636,313 647,324 658,330 668,370 690,411 723,437 733,454 777,441 798,430 820,360 842,272 852,225 874,159 896,151 906,160 917,163 939,128 950,117 971,88 993,97 1025,112 1058,100 1069,117 1079,147 1101,187 1112,187 1123,176 1144,160 1155,169 1177,163 1198,172 1209,128 1231,109 1252,123 1274,142 1296,172 1320,176 1350,196 1360,224 1371,290 1382,340 1393,375 1404,397 1425,418 1447,442 1458,451 1469,448 1479,460 1490,445 1501,424 1523,402 1533,387 1544,363 1555,322'],
[1380, 1.3436, '0,309 19,319 30,384 51,455 62,506 73,523 105,502 116,489 127,460 138,457 159,432 181,402 202,376 224,343 245,302 256,264 267,232 277,209 299,203 310,202 331,186 342,184 363,190 374,184 385,190 400,197 417,180 439,169 449,172 471,199 482,199 492,193 503,190 514,182 525,184 535,195 546,228 557,290 568,330 578,360 589,388 611,409 632,418 643,415 654,401 675,382 697,357 707,346 718,352 729,342 747,328 772,328 783,281 793,266 804,257 815,240 836,206 858,178 880,160 890,157 901,145 922,163 944,178 965,169 987,184 998,202 1008,211 1019,214 1030,206 1041,184 1051,178 1062,148 1084,121 1094,127 1116,145 1137,148 1159,162 1202,181 1213,194 1234,236 1245,245 1256,262 1266,266 1277,256 1299,244 1320,229 1352,226 1363,229 1385,223 1406,229 1427,233 1438,238 1449,230 1460,223 1470,234 1481,239 1492,233']], 'stroke="#fff"');
$('macd').innerHTML = `<g transform="translate(-234 -1116)">${m}</g>`;
</script>
</body>
</html>
